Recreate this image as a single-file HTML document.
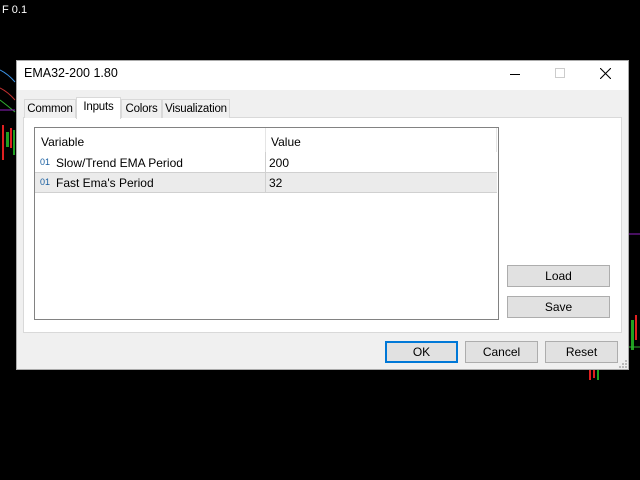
<!DOCTYPE html>
<html><head><style>
*{margin:0;padding:0;box-sizing:border-box}
body{width:640px;height:480px;background:#000;position:relative;overflow:hidden;font-family:"Liberation Sans",sans-serif;font-size:12px;color:#000}
.a{position:absolute}
.btn{position:absolute;background:#e1e1e1;border:1px solid #adadad;text-align:center;line-height:21px}
.tab{position:absolute;top:99px;height:19px;border:1px solid #d9d9d9;border-bottom:none;background:#f0f0f0;line-height:19px;text-align:center;font-size:11.5px;letter-spacing:-0.2px;white-space:nowrap}
</style></head><body>
<div class="a" style="left:2px;top:4px;color:#fff;font-size:11px">F 0.1</div>
<svg class="a" style="left:0;top:60px" width="16" height="250">
<path d="M0 10 Q8 14 15 22" stroke="#3a8fe0" fill="none"/>
<path d="M0 28 Q8 32 15 40" stroke="#c03030" fill="none"/>
<path d="M0 40 Q8 46 15 52" stroke="#30b030" fill="none"/>
<path d="M0 50 H15" stroke="#9020c0"/>
<rect x="2" y="65" width="2" height="35" fill="#e02020"/>
<rect x="6" y="72" width="3" height="15" fill="#20a020"/>
<rect x="10" y="68" width="2" height="20" fill="#e02020"/>
<rect x="13" y="70" width="2" height="25" fill="#20a020"/>
</svg>
<svg class="a" style="left:629px;top:230px" width="11" height="160">
<path d="M0 4 H11" stroke="#9020c0"/>
<rect x="2" y="90" width="3" height="30" fill="#20a020"/>
<rect x="6" y="85" width="2" height="25" fill="#e02020"/>
<path d="M0 117 H11" stroke="#30b030"/>
</svg>
<svg class="a" style="left:585px;top:368px" width="20" height="14">
<rect x="4" y="0" width="2" height="12" fill="#e02020"/>
<rect x="8" y="0" width="2" height="10" fill="#e02020"/>
<rect x="12" y="0" width="2" height="12" fill="#20a020"/>
</svg>
<div class="a" style="left:16px;top:60px;width:613px;height:310px;background:#f0f0f0;border:1px solid #aaa"></div>
<div class="a" style="left:17px;top:61px;width:611px;height:29px;background:#fff"></div>
<div class="a" style="left:24px;top:66px;font-size:12.5px">EMA32-200 1.80</div>
<div class="a" style="left:510px;top:74px;width:10px;height:1px;background:#000"></div>
<div class="a" style="left:555px;top:68px;width:10px;height:10px;border:1px solid #ccc"></div>
<svg class="a" style="left:600px;top:68px" width="11" height="11"><path d="M0 0L11 11M11 0L0 11" stroke="#000" stroke-width="1.1"/></svg>
<div class="a" style="left:23px;top:117px;width:599px;height:216px;background:#fff;border:1px solid #d9d9d9"></div>
<div class="tab" style="left:24px;width:52px">Common</div>
<div class="tab" style="left:121px;width:41px">Colors</div>
<div class="tab" style="left:162px;width:68px">Visualization</div>
<div class="tab" style="left:76px;top:97px;height:22px;width:45px;background:#fff;line-height:18px">Inputs</div>
<div class="a" style="left:34px;top:127px;width:465px;height:193px;border:1px solid #828282;background:#fff"></div>
<div class="a" style="left:41px;top:135px">Variable</div>
<div class="a" style="left:271px;top:135px">Value</div>
<div class="a" style="left:265px;top:128px;width:1px;height:64px;background:#e5e5e5"></div>
<div class="a" style="left:496px;top:128px;width:1px;height:24px;background:#e5e5e5"></div>
<div class="a" style="left:35px;top:172px;width:462px;height:1px;background:#d0d0d0"></div>
<div class="a" style="left:35px;top:173px;width:462px;height:19px;background:#ebebeb"></div>
<div class="a" style="left:35px;top:192px;width:462px;height:1px;background:#d0d0d0"></div>
<div class="a" style="left:265px;top:152px;width:1px;height:41px;background:#d0d0d0"></div>
<div class="a" style="left:40px;top:157px;font-size:9px;color:#1a5fa0">01</div>
<div class="a" style="left:56px;top:156px">Slow/Trend EMA Period</div>
<div class="a" style="left:269px;top:156px">200</div>
<div class="a" style="left:40px;top:177px;font-size:9px;color:#1a5fa0">01</div>
<div class="a" style="left:56px;top:176px">Fast Ema's Period</div>
<div class="a" style="left:269px;top:176px">32</div>
<div class="btn" style="left:507px;top:265px;width:103px;height:22px">Load</div>
<div class="btn" style="left:507px;top:296px;width:103px;height:22px">Save</div>
<div class="btn" style="left:385px;top:341px;width:73px;height:22px;border:2px solid #0078d7;line-height:19px">OK</div>
<div class="btn" style="left:465px;top:341px;width:73px;height:22px">Cancel</div>
<div class="btn" style="left:545px;top:341px;width:73px;height:22px">Reset</div>
<svg class="a" style="left:619px;top:360px" width="8" height="8"><g fill="#bbb"><rect x="6" y="0" width="2" height="2"/><rect x="3" y="3" width="2" height="2"/><rect x="6" y="3" width="2" height="2"/><rect x="0" y="6" width="2" height="2"/><rect x="3" y="6" width="2" height="2"/><rect x="6" y="6" width="2" height="2"/></g></svg>
</body></html>
